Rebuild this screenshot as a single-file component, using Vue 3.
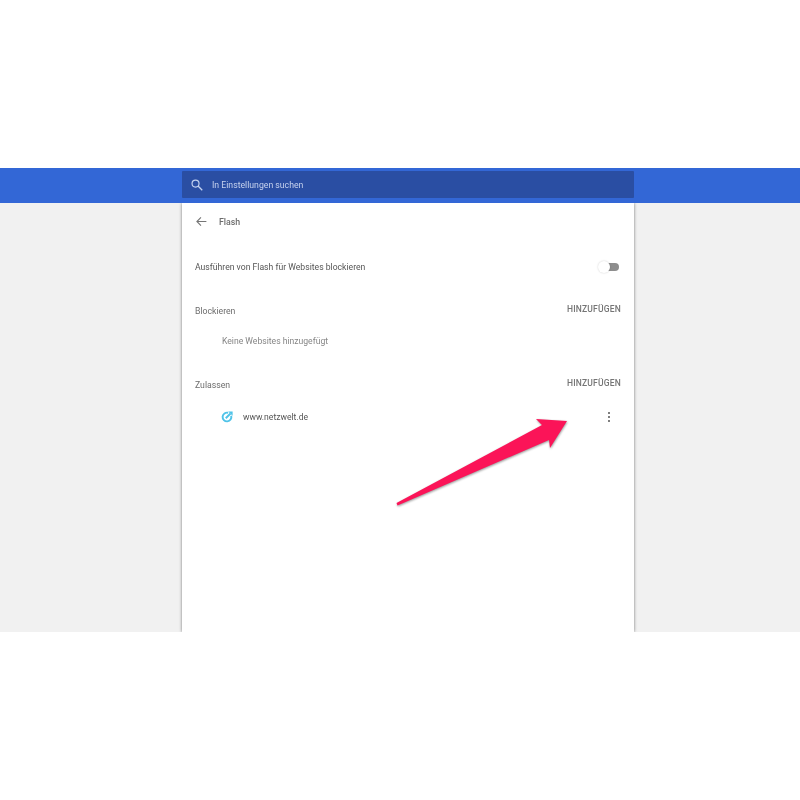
<script setup>
const sections = [
  { title: 'Blockieren', empty: 'Keine Websites hinzugefügt' },
  { title: 'Zulassen', site: 'www.netzwelt.de' }
]
</script>

<template>
  <div class="page">
    <div class="shot">
      <header class="bar">
        <div class="search">
          <svg class="search-icon" viewBox="0 0 24 24" width="14" height="14">
            <circle cx="9.5" cy="9.5" r="6" fill="none" stroke="#c3d2f0" stroke-width="2" />
            <path d="M13.8 13.8 21 21" stroke="#c3d2f0" stroke-width="2.2" fill="none" />
          </svg>
          <span class="search-text">In Einstellungen suchen</span>
        </div>
      </header>
      <main class="body">
        <section class="card">
          <div class="head">
            <svg viewBox="0 0 24 24" width="13" height="13">
              <path d="M21 12H4M11 4.5 3.5 12l7.5 7.5" fill="none" stroke="#757575" stroke-width="2" />
            </svg>
            <span class="head-title">Flash</span>
          </div>
          <div class="toggle-row">
            <span class="label">Ausführen von Flash für Websites blockieren</span>
            <span class="toggle"><span class="knob"></span></span>
          </div>
          <div v-for="s in sections" :key="s.title" class="group">
            <div class="group-head">
              <span class="group-title">{{ s.title }}</span>
              <span class="add">HINZUFÜGEN</span>
            </div>
            <div v-if="s.empty" class="empty">{{ s.empty }}</div>
            <div v-else class="site">
              <svg viewBox="0 0 16 16" width="14" height="14">
                <path d="M9.3 3.2A5 5 0 1 0 12.8 6.7" fill="none" stroke="#4fc3e8" stroke-width="2.2" />
                <path d="M6.6 9.4 12 4" stroke="#4fc3e8" stroke-width="2.2" fill="none" />
                <path d="M9.4 1.6h5v5z" fill="#4fc3e8" />
              </svg>
              <span class="site-name">{{ s.site }}</span>
              <span class="dots"><i></i><i></i><i></i></span>
            </div>
          </div>
        </section>
      </main>
    </div>
    <svg class="arrow" viewBox="0 0 800 800" width="800" height="800">
      <path class="arrow-shadow" d="M397.5 505.5 549 440 550 448 567 421 536 419 542 425 396.5 503z" />
      <path d="M397.5 505.5 549 440 550 448 567 421 536 419 542 425 396.5 503z" fill="#fb1458" />
    </svg>
  </div>
</template>

<style scoped>
.page {
  position: relative;
  width: 800px;
  height: 800px;
  background: #fff;
  padding-top: 168px;
  box-sizing: border-box;
  font-family: Roboto, "Liberation Sans", sans-serif;
  overflow: hidden;
}
.shot {
  height: 464px;
  display: flex;
  flex-direction: column;
  background: #f1f1f1;
  filter: blur(.3px);
}
.bar {
  height: 35px;
  background: #3367d6;
  padding: 3px 0 0 182px;
  box-sizing: border-box;
  display: flex;
  flex: none;
}
.search {
  width: 452px;
  height: 27px;
  background: #2a4ea3;
  display: flex;
  align-items: center;
  padding-left: 8px;
  box-sizing: border-box;
  border-radius: 1px;
}
.search-text {
  margin-left: 8px;
  font-size: 8.7px;
  color: #c6d2ee;
}
.body {
  flex: 1;
  min-height: 0;
  display: flex;
  padding-left: 182px;
  overflow: hidden;
}
.card {
  width: 452px;
  height: 100%;
  background: #fff;
  box-shadow: 0 0 3px rgba(0, 0, 0, .5);
  padding: 0 13px;
  box-sizing: border-box;
}
.head {
  height: 37px;
  display: flex;
  align-items: center;
  gap: 11px;
}
.head-title {
  font-size: 8.8px;
  font-weight: 500;
  color: #6d6d6d;
}
.toggle-row {
  height: 26px;
  margin: 14px 0 24px;
  display: flex;
  align-items: center;
  justify-content: space-between;
}
.label {
  font-size: 8.65px;
  color: #555;
}
.toggle {
  position: relative;
  width: 20px;
  height: 8px;
  margin-right: 2px;
  background: #8e8e8e;
  border-radius: 4px;
}
.knob {
  position: absolute;
  left: -1px;
  top: -2px;
  width: 12px;
  height: 12px;
  border-radius: 50%;
  background: #fff;
  box-shadow: 0 0 2px rgba(0, 0, 0, .2);
}
.group-head {
  display: flex;
  justify-content: space-between;
  align-items: flex-start;
  height: 19px;
}
.group + .group {
  margin-top: 19px;
}
.group-title {
  font-size: 8.7px;
  color: #6d6d6d;
  padding-top: 2px;
}
.add {
  font-size: 8.5px;
  font-weight: 500;
  letter-spacing: .2px;
  color: #757575;
}
.empty {
  height: 36px;
  display: flex;
  align-items: center;
  padding-left: 27px;
  font-size: 8.6px;
  color: #858585;
}
.site {
  height: 38px;
  padding-top: 2px;
  box-sizing: border-box;
  display: flex;
  align-items: center;
  padding-left: 25px;
}
.site-name {
  margin-left: 9px;
  font-size: 8.6px;
  color: #555;
}
.dots {
  margin-left: auto;
  margin-right: 11px;
  display: flex;
  flex-direction: column;
  gap: 1.5px;
}
.dots i {
  width: 2.5px;
  height: 2.5px;
  border-radius: 50%;
  background: #555;
}
.arrow {
  position: absolute;
  left: 0;
  top: 0;
  pointer-events: none;
}
.arrow-shadow {
  fill: #555;
  opacity: .6;
  filter: blur(1px);
  transform: translate(.5px, 1px);
}
</style>
